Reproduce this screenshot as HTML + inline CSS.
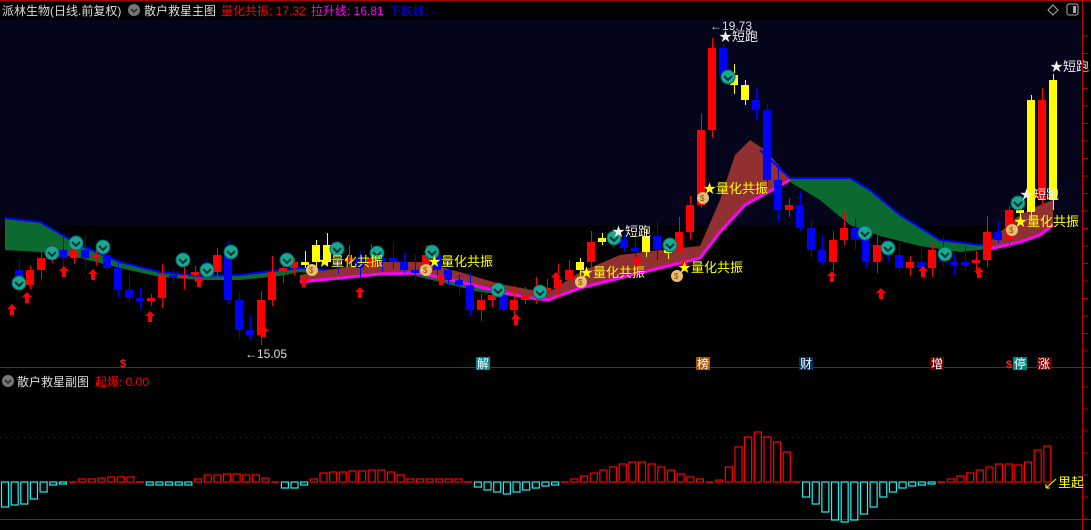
<!DOCTYPE html>
<html><head><meta charset="utf-8"><style>
html,body{margin:0;padding:0;background:#000;width:1091px;height:530px;overflow:hidden;font-family:"Liberation Sans","Noto Sans CJK SC",sans-serif}
svg{display:block}
</style></head><body>
<svg id="s" width="1091" height="530" xmlns="http://www.w3.org/2000/svg" font-family="Liberation Sans, Noto Sans CJK SC, sans-serif">
<rect width="1091" height="530" fill="#000"/>
<rect x="0" y="20" width="1082" height="205" fill="#04041a"/>
<line x1="0" y1="0.5" x2="1091" y2="0.5" stroke="#a00" />
<g id="bands"></g>
<g id="candles"></g>
<g id="marks"></g>
<text x="2" y="15" font-size="12" fill="#ddd">派林生物(日线.前复权)</text>
<circle cx="134" cy="10" r="6" fill="#777"/><path d="M131 9 l3 3 l3 -3" stroke="#222" stroke-width="1.5" fill="none"/>
<text x="144" y="15" font-size="12" fill="#ddd">散户救星主图</text>
<text x="221" y="15" font-size="12" fill="#f00">量化共振: 17.32</text>
<text x="311" y="15" font-size="12" fill="#f0f">拉升线: 16.81</text>
<text x="389" y="15" font-size="12" fill="#00f">下跌线: -</text>
<path d="M1053 5 l5 5 l-5 5 l-5 -5z" stroke="#aaa" fill="none"/>
<rect x="1067" y="4" width="11" height="11" rx="2" stroke="#aaa" fill="none"/><rect x="1073" y="6" width="3" height="7" fill="#aaa"/>
<line x1="1082.5" y1="0" x2="1082.5" y2="530" stroke="#b00"/>
<line x1="0" y1="367.5" x2="1091" y2="367.5" stroke="#b00"/>
<line x1="0" y1="519.5" x2="1091" y2="519.5" stroke="#b00"/>
<line x1="0" y1="437.5" x2="1082" y2="437.5" stroke="#b00" stroke-dasharray="1 5"/>
<g id="ticks"></g>
<circle cx="8" cy="381" r="6" fill="#777"/><path d="M5 380 l3 3 l3 -3" stroke="#222" stroke-width="1.5" fill="none"/>
<text x="17" y="386" font-size="12" fill="#ddd">散户救星副图</text>
<text x="95" y="386" font-size="12" fill="#f00">起爆: 0.00</text>
<g id="sub"></g>
<text x="120" y="367" font-size="11" fill="#f22" font-weight="bold">$</text>
<rect x="476" y="357" width="14" height="13" fill="#088"/><text x="477" y="368" font-size="12" fill="#fff">解</text>
<rect x="696" y="357" width="14" height="13" fill="#a50"/><text x="697" y="368" font-size="12" fill="#fff">榜</text>
<rect x="799" y="357" width="14" height="13" fill="#036"/><text x="800" y="368" font-size="12" fill="#fff">财</text>
<rect x="930" y="357" width="14" height="13" fill="#600"/><text x="931" y="368" font-size="12" fill="#fff">增</text>
<text x="1006" y="368" font-size="11" fill="#f22" font-weight="bold">$</text>
<rect x="1013" y="357" width="14" height="13" fill="#088"/><text x="1014" y="368" font-size="12" fill="#fff">停</text>
<rect x="1037" y="357" width="14" height="13" fill="#700"/><text x="1038" y="368" font-size="12" fill="#fff">涨</text>
<text x="1058" y="487" font-size="13" fill="#ff0">里起</text>
<path d="M1046 488 l10 -9 M1046 488 l0 -4 M1046 488 l4 0" stroke="#ff0" fill="none"/>
<text x="245" y="358" font-size="12" fill="#ddd">←15.05</text>
<text x="710" y="30" font-size="12" fill="#ddd">←19.73</text>
</svg>
<script>
(function(){
var NS="http://www.w3.org/2000/svg";
function el(p,t,a,txt){var e=document.createElementNS(NS,t);for(var k in a)e.setAttribute(k,a[k]);if(txt)e.textContent=txt;document.getElementById(p).appendChild(e);return e;}
function pts(a){return a.map(function(p){return p.join(",")}).join(" ");}
var gU=[[5,218],[40,222],[80,245],[120,262],[160,272],[200,276],[240,275],[280,270],[300,268]];
var gL=[[300,272],[280,276],[240,280],[200,280],[160,277],[120,268],[80,258],[40,252],[5,250]];
el("bands","polygon",{points:pts(gU.concat(gL)),fill:"#0a6a30"});
el("bands","polyline",{points:pts(gU),stroke:"#00f",fill:"none","stroke-width":2});
var g2U=[[300,268],[330,270],[360,272],[400,262],[440,275],[480,284],[520,290],[548,293]];
var g2L=[[548,295],[520,297],[480,292],[440,282],[400,272],[360,276],[330,276],[300,272]];
el("bands","polygon",{points:pts(g2U.concat(g2L)),fill:"#0a6a30"});
el("bands","polyline",{points:pts(g2U),stroke:"#00f",fill:"none","stroke-width":2});
var mag=[[300,282],[340,278],[380,274],[420,273],[460,282],[500,292],[530,298],[548,300],[580,288],[620,278],[660,268],[700,258],[720,232],[745,205],[790,180]];
var redU=[[300,275],[340,268],[380,262],[420,262],[460,272],[500,284],[548,293],[580,272],[620,255],[660,250],[700,246],[720,200],[735,155],[750,140],[765,150],[790,178]];
el("bands","polygon",{points:pts(redU.concat(mag.slice().reverse())),fill:"#903030"});
el("bands","polyline",{points:pts(mag),stroke:"#f0f",fill:"none","stroke-width":3});
var g3U=[[790,178],[850,178],[870,190],[900,215],[940,240],[980,245],[1000,242]];
var g3L=[[1000,246],[980,250],[960,252],[920,246],[880,236],[850,225],[820,200],[790,182]];
el("bands","polygon",{points:pts(g3U.concat(g3L)),fill:"#0a6a30"});
el("bands","polyline",{points:pts([[760,150]].concat(g3U)),stroke:"#00f",fill:"none","stroke-width":2});
var m2=[[985,250],[1020,242],[1040,235],[1053,225]];
var r2=[[985,246],[1000,232],[1020,215],[1040,205],[1053,200]];
el("bands","polygon",{points:pts(r2.concat(m2.slice().reverse())),fill:"#903030"});
el("bands","polyline",{points:pts(m2),stroke:"#f0f",fill:"none","stroke-width":3});
var C=[[8,270],[19,285],[30,270],[41,258],[52,250],[63,258],[74,250],[85,258],[96,255],[107,268],[118,290],[129,298],[140,300],[151,298],[162,275],[173,278],[184,275],[195,272],[206,272],[217,255],[228,300],[239,330],[250,335],[261,300],[272,272],[283,268],[294,262],[305,262],[316,245],[327,262],[338,262],[349,258],[360,268],[371,258],[382,258],[393,262],[404,270],[415,272],[426,255],[437,270],[448,280],[459,285],[470,310],[481,300],[492,295],[503,310],[514,300],[525,295],[536,292],[547,288],[558,280],[569,270],[580,262],[591,242],[602,238],[613,240],[624,248],[635,252],[646,236],[657,250],[668,252],[679,232],[690,205],[701,130],[712,48],[723,75],[734,85],[745,100],[756,110],[767,180],[778,210],[789,205],[800,228],[811,250],[822,262],[833,240],[844,228],[855,240],[866,262],[877,245],[888,255],[899,268],[910,262],[921,268],[932,250],[943,262],[954,262],[965,262],[976,260],[987,232],[998,240],[1009,210],[1020,212],[1031,100],[1042,200],[1053,80]];
var yel={305:1,316:1,327:1,580:1,602:1,646:1,668:1,734:1,745:1,1020:1,1031:1,1053:1};
var red={1042:1};
for(var i=1;i<C.length;i++){var x=C[i][0],o=C[i-1][1],c=C[i][1];var tp=Math.min(o,c),bt=Math.max(o,c);if(bt-tp<3){bt=tp+3;}
var up=c<o;var col=yel[x]?"#ff0":(red[x]||up?"#f00":"#00f");
var wt=tp-4-((i*7)%13),wb=bt+3+((i*5)%9);
el("candles","line",{x1:x+.5,x2:x+.5,y1:wt,y2:wb,stroke:col});
el("candles","rect",{x:x-4,y:tp,width:8,height:bt-tp,fill:col});}
[[19,283],[52,253],[76,243],[103,247],[183,260],[207,270],[231,252],[287,260],[337,249],[377,253],[432,252],[498,290],[540,292],[614,238],[670,245],[728,77],[865,233],[888,248],[945,254],[1018,203]].forEach(function(p){
el("marks","circle",{cx:p[0],cy:p[1],r:7,fill:"#1aa890",stroke:"#066","stroke-width":1});
el("marks","path",{d:"M"+(p[0]-4)+" "+(p[1]-1)+" l4 4 l4 -4",stroke:"#033",fill:"none","stroke-width":2});});
[[12,310],[27,298],[64,272],[93,275],[150,317],[199,282],[264,332],[304,282],[360,293],[441,280],[516,320],[556,278],[637,262],[684,266],[832,277],[881,294],[923,272],[979,273]].forEach(function(p){
el("marks","path",{d:"M"+p[0]+" "+(p[1]-6)+" l-5 5 h3 v6 h4 v-6 h3z",fill:"#f00"});});
[[312,270],[426,270],[581,282],[677,276],[703,198],[1012,230]].forEach(function(p){
el("marks","circle",{cx:p[0],cy:p[1],r:6,fill:"#e8c070"});el("marks","text",{x:p[0]-3,y:p[1]+3,"font-size":8,fill:"#840"},"$");});
[[318,266],[428,266],[580,277],[678,272],[703,193],[1014,226]].forEach(function(p){
el("marks","text",{x:p[0],y:p[1],"font-size":13,fill:"#ff0"},"★量化共振");});
[[612,236],[719,41],[1020,199],[1050,71]].forEach(function(p){
el("marks","text",{x:p[0],y:p[1],"font-size":13,fill:"#eee"},"★短跑");});
for(var y=36;y<365;y+=17.5)el("ticks","line",{x1:1083,x2:1088,y1:y,y2:y,stroke:"#b00"});
for(var y2=387;y2<520;y2+=22)el("ticks","line",{x1:1083,x2:1088,y1:y2,y2:y2,stroke:"#b00"});
var H=[-25,-23,-22,-17,-10,-3,-2,0,3,3,4,5,5,5,0,-3,-3,-3,-3,-3,3,7,7,8,8,7,7,4,0,-6,-6,-3,3,9,10,10,11,11,12,12,10,7,3,3,3,3,3,3,0,-5,-8,-10,-12,-10,-8,-6,-4,-3,0,3,6,9,12,15,18,20,20,18,15,12,8,5,3,0,2,15,35,45,50,45,40,30,0,-15,-22,-30,-38,-40,-38,-32,-25,-15,-10,-6,-4,-3,-2,0,3,6,9,12,15,18,18,17,20,32,36];
var n=H.length;for(var j=0;j<n;j++){var h=H[j],xx=1+j*(1052/n);var cl=h>=0?"#f00":"#2ee";
if(Math.abs(h)<1){el("sub","line",{x1:xx,x2:xx+8,y1:482,y2:482,stroke:cl,"stroke-width":1.5});continue;}
el("sub","rect",{x:xx+.5,y:h>0?482-h:482,width:7,height:Math.abs(h),fill:"none",stroke:cl,"stroke-width":1.2});}
})();
</script>
</body></html>
